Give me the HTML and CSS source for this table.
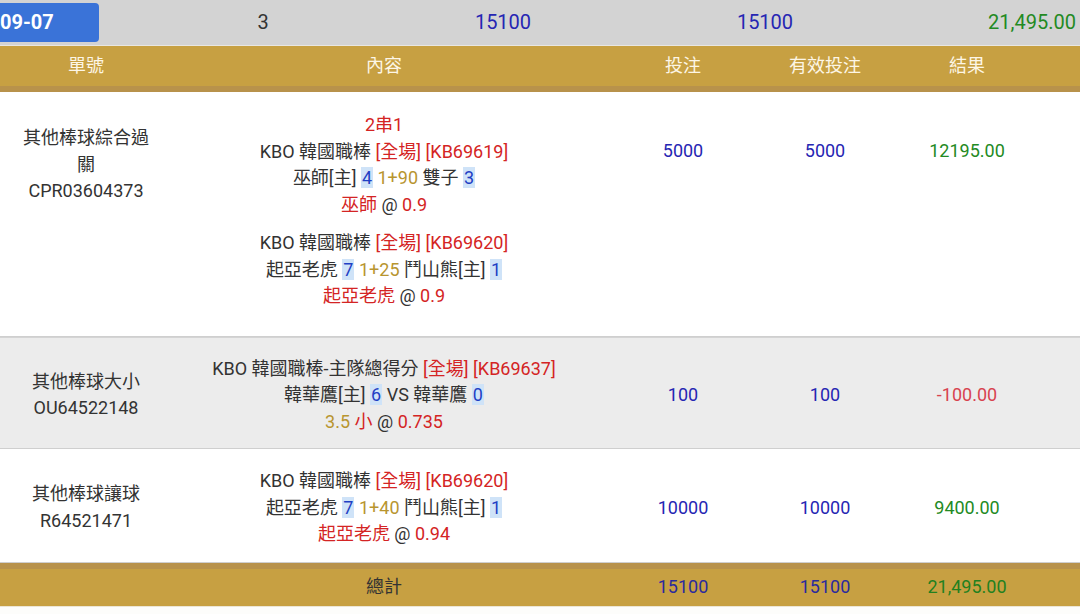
FILE: index.html
```html
<!DOCTYPE html>
<html lang="zh-Hant">

<head>
    <meta charset="UTF-8">
    <meta name="viewport" content="width=device-width, initial-scale=1.0">
    <title>注單明細</title>
    <link rel="stylesheet" href="styles.css">
</head>

<body>
    <div class="summary">
        <div class="date-tab">09-07</div>
        <div class="sum-cell">3</div>
        <div class="sum-cell amount">15100</div>
        <div class="sum-cell amount">15100</div>
        <div class="sum-cell win sum-end">21,495.00</div>
    </div>

    <div class="head cols">
        <div>單號</div>
        <div>內容</div>
        <div>投注</div>
        <div>有效投注</div>
        <div>結果</div>
    </div>
    <div class="head-edge"></div>

    <div class="bet cols bet-parlay">
        <div class="bet-no">其他棒球綜合過<br>關<br>CPR03604373</div>
        <div class="bet-info">
            <div class="leg">
                <div class="red">2串1</div>
                <div>KBO 韓國職棒 <span class="red">[全場] [KB69619]</span></div>
                <div>巫師[主] <span class="score">4</span> <span class="gold">1+90</span> 雙子 <span class="score">3</span></div>
                <div><span class="red">巫師</span> @ <span class="red">0.9</span></div>
            </div>
            <div class="leg">
                <div>KBO 韓國職棒 <span class="red">[全場] [KB69620]</span></div>
                <div>起亞老虎 <span class="score">7</span> <span class="gold">1+25</span> 鬥山熊[主] <span class="score">1</span></div>
                <div><span class="red">起亞老虎</span> @ <span class="red">0.9</span></div>
            </div>
        </div>
        <div class="amount">5000</div>
        <div class="amount">5000</div>
        <div class="win">12195.00</div>
    </div>

    <div class="bet cols bet-alt">
        <div class="bet-no">其他棒球大小<br>OU64522148</div>
        <div class="bet-info">
            <div>KBO 韓國職棒-主隊總得分 <span class="red">[全場] [KB69637]</span></div>
            <div>韓華鷹[主] <span class="score">6</span> VS 韓華鷹 <span class="score">0</span></div>
            <div><span class="gold">3.5</span> <span class="red">小</span> @ <span class="red">0.735</span></div>
        </div>
        <div class="amount">100</div>
        <div class="amount">100</div>
        <div class="lose">-100.00</div>
    </div>

    <div class="bet cols bet-last">
        <div class="bet-no">其他棒球讓球<br>R64521471</div>
        <div class="bet-info">
            <div>KBO 韓國職棒 <span class="red">[全場] [KB69620]</span></div>
            <div>起亞老虎 <span class="score">7</span> <span class="gold">1+40</span> 鬥山熊[主] <span class="score">1</span></div>
            <div><span class="red">起亞老虎</span> @ <span class="red">0.94</span></div>
        </div>
        <div class="amount">10000</div>
        <div class="amount">10000</div>
        <div class="win">9400.00</div>
    </div>

    <div class="foot-edge"></div>
    <div class="foot cols">
        <div></div>
        <div>總計</div>
        <div class="amount">15100</div>
        <div class="amount">15100</div>
        <div class="win">21,495.00</div>
    </div>
</body>

</html>
```

FILE: styles.css
```css
* {
    margin: 0;
    padding: 0;
    box-sizing: border-box;
}

body {
    width: 1080px;
    height: 614px;
    overflow: hidden;
    background-color: #fdfdfb;
    font-family: Roboto, "Noto Sans CJK TC", sans-serif;
    font-size: 18px;
    line-height: 26.5px;
    color: #333;
}

/* top summary bar */
.summary {
    display: grid;
    grid-template-columns: 100px 326px 154px 370px 1fr;
    align-items: center;
    height: 46px;
    padding: 3px 4px 4px 0;
    background-color: #d3d3d3;
    border-bottom: 1px solid #e9e7e2;
    font-size: 20px;
}

.date-tab {
    height: 39px;
    width: 99px;
    line-height: 39px;
    border-radius: 0 4px 4px 0;
    background-color: #3a73d8;
    color: #fff;
    font-weight: bold;
}

.sum-cell {
    text-align: center;
}

.sum-end {
    text-align: right;
}

/* shared column layout */
.cols {
    display: grid;
    grid-template-columns: 172px 424px 174px 110px 174px 1fr;
    align-items: center;
    text-align: center;
}

/* header */
.head {
    height: 40px;
    background-color: #c7a042;
    color: #fdf6e6;
}

.head-edge,
.foot-edge {
    height: 6px;
    background-color: #b8924b;
}

/* bet rows */
.bet {
    padding: 19px 0 13px;
    background-color: #fff;
    border-bottom: 1px solid #cfcfcf;
}

.bet-alt {
    background-color: #ececec;
    border-top: 1px solid #d4d4d4;
    padding-top: 18px;
}

.bet-last {
    padding-bottom: 14px;
}

.bet-parlay {
    align-items: start;
    padding: 20px 0 26px;
}

.bet-parlay .bet-no {
    margin-top: 13px;
}

.bet-parlay .amount,
.bet-parlay .win {
    margin-top: 26px;
}

.leg + .leg {
    margin-top: 12px;
}

.score {
    background-color: #cfe3f8;
    color: #1f3fc4;
    padding: 0 1px;
}

.red {
    color: #d42424;
}

.gold {
    color: #b8952f;
}

.amount {
    color: #2626b3;
}

.win {
    color: #238a23;
}

.lose {
    color: #d8434f;
}

/* footer total */
.foot {
    height: 38px;
    background-color: #c7a042;
    border-bottom: 1px solid #ece6d6;
}

.foot .amount {
    color: #2a2a9e;
}

.foot .win {
    color: #23801f;
}
```
